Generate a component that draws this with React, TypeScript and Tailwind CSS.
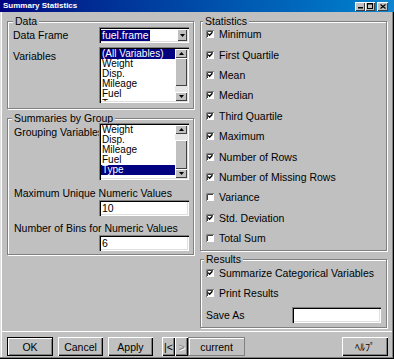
import React from "react";

const raised =
  "bg-[#c0c0c0] shadow-[inset_1px_1px_0_#fff,inset_-1px_-1px_0_#000,inset_-2px_-2px_0_#808080]";
const raisedSmall =
  "bg-[#c0c0c0] shadow-[inset_1px_1px_0_#fff,inset_-1px_-1px_0_#404040]";
const sunken =
  "bg-white shadow-[inset_1px_1px_0_#808080,inset_2px_2px_0_#000,inset_-1px_-1px_0_#fff,inset_-2px_-2px_0_#dfdfdf]";

function Group({
  label,
  labelLeft,
  className,
  children,
}: {
  label: string;
  labelLeft: string;
  className: string;
  children?: React.ReactNode;
}) {
  return (
    <div
      className={`relative border border-[#808080] shadow-[inset_1px_1px_0_#fff,1px_1px_0_#fff] ${className}`}
    >
      <span
        className={`absolute -top-[7px] px-[2px] bg-[#c0c0c0] leading-[12px] whitespace-nowrap ${labelLeft}`}
      >
        {label}
      </span>
      {children}
    </div>
  );
}

function Tri({ up }: { up?: boolean }) {
  return (
    <svg width="5" height="3" viewBox="0 0 5 3">
      {up ? <path d="M2.5 0 L5 3 L0 3 Z" fill="#000" /> : <path d="M0 0 L5 0 L2.5 3 Z" fill="#000" />}
    </svg>
  );
}

function ArrowBtn({ up }: { up?: boolean }) {
  return (
    <div className={`h-[9px] w-full flex items-center justify-center ${raisedSmall}`}>
      <Tri up={up} />
    </div>
  );
}

function ListBox({
  items,
  selected,
  height,
  thumbTop,
}: {
  items: string[];
  selected: number;
  height: string;
  thumbTop: boolean;
}) {
  return (
    <div className={`relative z-10 w-[90px] ${height} p-[2px] flex ${sunken}`}>
      <div className="flex-1 overflow-hidden">
        {items.map((it, i) => (
          <div
            key={it}
            className={`h-[10px] text-[10px] leading-[10px] pl-[1px] whitespace-nowrap ${
              i === selected ? "bg-[#000080] text-white" : ""
            }`}
          >
            {it}
          </div>
        ))}
      </div>
      <div className="w-[12px] flex flex-col">
        <ArrowBtn up />
        {thumbTop ? (
          <>
            <div className={`h-[28px] ${raisedSmall}`} />
            <div className="flex-1 bg-[#e6e6e6]" />
          </>
        ) : (
          <>
            <div className="h-[6px] bg-[#e6e6e6]" />
            <div className={`flex-1 ${raisedSmall}`} />
          </>
        )}
        <ArrowBtn />
      </div>
    </div>
  );
}

function TextInput({ value, width }: { value: string; width: string }) {
  return (
    <div className={`${width} h-[16px] p-[2px] flex items-center leading-[12px] ${sunken}`}>
      <span className="pl-[1px]">{value}</span>
    </div>
  );
}

function Check({ on }: { on: boolean }) {
  return (
    <svg width="8" height="8" viewBox="0 0 8 8" className="shrink-0">
      <rect x="0" y="0" width="8" height="8" fill="#fff" />
      <path d="M0.5 8 V0.5 H8" stroke="#808080" strokeWidth="1" fill="none" />
      <path d="M1.5 7 V1.5 H7" stroke="#404040" strokeWidth="1" fill="none" />
      {on && <path d="M2.2 3.6 L3.6 5.2 L6.4 2.2" stroke="#000" strokeWidth="1.4" fill="none" />}
    </svg>
  );
}

function CheckRow({ on, label, h }: { on: boolean; label: string; h: string }) {
  return (
    <div className={`${h} flex items-center gap-[5px] whitespace-nowrap`}>
      <Check on={on} />
      <span>{label}</span>
    </div>
  );
}

function TBtn({ children, extra }: { children: React.ReactNode; extra?: string }) {
  return (
    <div className={`w-[10px] h-[9px] flex items-center justify-center ${raisedSmall} ${extra ?? ""}`}>
      {children}
    </div>
  );
}

const stats: [string, boolean][] = [
  ["Minimum", true],
  ["First Quartile", true],
  ["Mean", true],
  ["Median", true],
  ["Third Quartile", true],
  ["Maximum", true],
  ["Number of Rows", true],
  ["Number of Missing Rows", true],
  ["Variance", false],
  ["Std. Deviation", true],
  ["Total Sum", false],
];

export default function App() {
  return (
    <div className="relative w-[394px] h-[359px] overflow-hidden bg-[#c0c0c0] text-black text-[10.5px] leading-[12px] font-['Liberation_Sans',Arial,sans-serif] shadow-[inset_-1px_-1px_0_#000,inset_-2px_-2px_0_#808080,inset_1px_0_0_#dfdfdf,inset_2px_0_0_#fff]">
      {/* Title bar */}
      <div className="h-[12px] flex items-center bg-linear-to-r from-[#000080] to-[#1084d0] pl-[3px] pr-[6px]">
        <span className="text-white font-bold text-[8px] leading-[10px] whitespace-nowrap">
          Summary Statistics
        </span>
        <div className="ml-auto flex items-center">
          <TBtn>
            <svg width="5" height="6" viewBox="0 0 5 6">
              <rect x="0" y="4" width="5" height="1.5" fill="#000" />
            </svg>
          </TBtn>
          <TBtn>
            <svg width="6" height="6" viewBox="0 0 6 6">
              <rect x="0.5" y="0.5" width="5" height="5" stroke="#000" strokeWidth="1" fill="none" />
              <rect x="0" y="0" width="6" height="1.5" fill="#000" />
            </svg>
          </TBtn>
          <TBtn extra="ml-[2px] w-[11px]">
            <svg width="6" height="5" viewBox="0 0 6 5">
              <path d="M0.5 0.5 L5.5 4.5 M5.5 0.5 L0.5 4.5" stroke="#000" strokeWidth="1.2" />
            </svg>
          </TBtn>
        </div>
      </div>

      {/* Content */}
      <div className="h-[316px] pt-[9px] pl-[7px] flex gap-[6px]">
        {/* Left column */}
        <div className="w-[187px] flex flex-col">
          <Group label="Data" labelLeft="left-[5px]" className="h-[88px]">
            <div className="flex items-center mt-[5px] pl-[5px]">
              <span className="w-[86px] whitespace-nowrap">Data Frame</span>
              <div className={`w-[90px] h-[16px] p-[2px] flex items-center ${sunken}`}>
                <div className="flex-1 flex items-center">
                  <span className="bg-[#000080] text-white px-[1px] leading-[11px]">fuel.frame</span>
                </div>
                <div className={`w-[10px] h-[12px] flex items-center justify-center ${raisedSmall}`}>
                  <Tri />
                </div>
              </div>
            </div>
            <div className="flex items-start mt-[4px] pl-[5px]">
              <span className="w-[86px] pt-[3px] whitespace-nowrap">Variables</span>
              <ListBox
                items={["(All Variables)", "Weight", "Disp.", "Mileage", "Fuel", "Type"]}
                selected={0}
                height="h-[56px]"
                thumbTop
              />
            </div>
          </Group>

          <Group label="Summaries by Group" labelLeft="left-[4px]" className="h-[137px] mt-[9px]">
            <div className="flex items-start mt-[4px] pl-[6px]">
              <span className="w-[85px] pt-[3px] whitespace-nowrap">Grouping Variables</span>
              <ListBox
                items={["Weight", "Disp.", "Mileage", "Fuel", "Type"]}
                selected={4}
                height="h-[57px]"
                thumbTop={false}
              />
            </div>
            <div className="pl-[6px] mt-[7px] whitespace-nowrap">Maximum Unique Numeric Values</div>
            <div className="pl-[91px] mt-[1px]">
              <TextInput value="10" width="w-[90px]" />
            </div>
            <div className="pl-[6px] mt-[6px] whitespace-nowrap">Number of Bins for Numeric Values</div>
            <div className="pl-[91px] mt-[1px]">
              <TextInput value="6" width="w-[90px]" />
            </div>
          </Group>
        </div>

        {/* Right column */}
        <div className="w-[187px] flex flex-col">
          <Group label="Statistics" labelLeft="left-[2px]" className="h-[230px]">
            <div className="mt-[2px] pl-[5px] flex flex-col">
              {stats.map(([s, on]) => (
                <CheckRow key={s} on={on} label={s} h="h-[20.4px]" />
              ))}
            </div>
          </Group>

          <Group label="Results" labelLeft="left-[3px]" className="h-[69px] mt-[8px]">
            <div className="mt-[3px] pl-[5px] flex flex-col">
              <CheckRow on label="Summarize Categorical Variables" h="h-[20px]" />
              <CheckRow on label="Print Results" h="h-[20px]" />
              <div className="mt-[4px] h-[16px] flex items-center">
                <span className="w-[86px]">Save As</span>
                <TextInput value="" width="w-[89px]" />
              </div>
            </div>
          </Group>
        </div>
      </div>

      {/* Bottom bar */}
      <div className="h-[31px] flex flex-col">
        <div className="mt-[3px] mx-[2px] h-[1px] bg-white" />
        <div className="mt-[5px] pl-[7px] pr-[6px] flex items-center">
          <div className="w-[46px] h-[19px] border border-black bg-[#c0c0c0] shadow-[inset_1px_1px_0_#fff,inset_-1px_-1px_0_#808080] flex items-center justify-center">
            OK
          </div>
          <div className={`ml-[5px] w-[45px] h-[19px] flex items-center justify-center ${raised}`}>Cancel</div>
          <div className={`ml-[5px] w-[45px] h-[19px] flex items-center justify-center ${raised}`}>Apply</div>
          <div className={`ml-[9px] w-[13px] h-[19px] flex items-center justify-center ${raised}`}>|&lt;</div>
          <div
            className={`w-[13px] h-[19px] flex items-center justify-center text-[#808080] [text-shadow:1px_1px_0_#fff] ${raised}`}
          >
            &gt;
          </div>
          <div className="w-[57px] h-[19px] border border-[#808080] shadow-[inset_1px_1px_0_#fff] flex items-center justify-center">
            current
          </div>
          <div
            className={`ml-auto w-[46px] h-[19px] flex items-center justify-center font-['Noto_Sans_CJK_JP',sans-serif] text-[10px] ${raised}`}
          >
            ﾍﾙﾌﾟ
          </div>
        </div>
      </div>
    </div>
  );
}
